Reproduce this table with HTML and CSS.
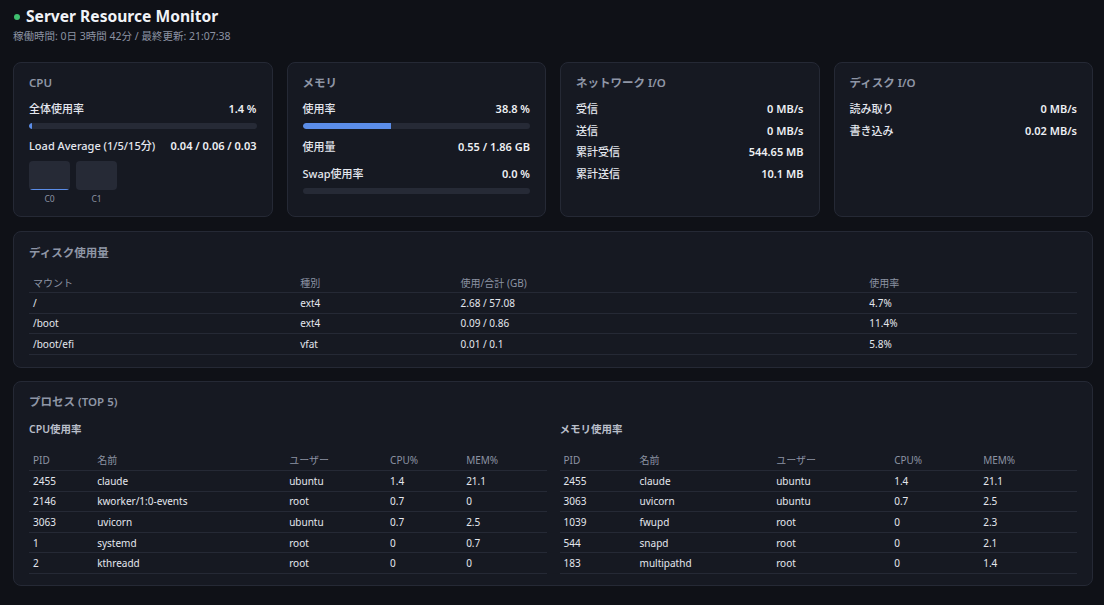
FILE: index.html
```html
<!DOCTYPE html>
<html lang="ja">
<head>
<meta charset="utf-8">
<title>Server Resource Monitor</title>
<link rel="stylesheet" href="styles.css">
</head>
<body>
<div class="page">
  <header class="header">
    <h1 class="title"><span class="dot"></span>Server Resource Monitor</h1>
    <div class="subtitle">稼働時間: 0日 3時間 42分 / 最終更新: 21:07:38</div>
  </header>

  <section class="cards">
    <div class="card">
      <div class="card-title">CPU</div>
      <div class="row"><span class="label">全体使用率</span><span class="value">1.4 %</span></div>
      <div class="bar"><div class="fill" style="width:1.4%"></div></div>
      <div class="row row-load"><span class="label">Load Average (1/5/15分)</span><span class="value">0.04 / 0.06 / 0.03</span></div>
      <div class="cores">
        <div class="core">
          <div class="core-box"><div class="core-fill" style="height:1.4%"></div></div>
          <div class="core-label">C0</div>
        </div>
        <div class="core">
          <div class="core-box"></div>
          <div class="core-label">C1</div>
        </div>
      </div>
    </div>

    <div class="card">
      <div class="card-title">メモリ</div>
      <div class="row"><span class="label">使用率</span><span class="value">38.8 %</span></div>
      <div class="bar"><div class="fill" style="width:38.8%"></div></div>
      <div class="row row-used"><span class="label">使用量</span><span class="value">0.55 / 1.86 GB</span></div>
      <div class="row row-swap"><span class="label">Swap使用率</span><span class="value">0.0 %</span></div>
      <div class="bar bar-swap"><div class="fill" style="width:0%"></div></div>
    </div>

    <div class="card">
      <div class="card-title">ネットワーク I/O</div>
      <div class="list">
        <div class="row"><span class="label">受信</span><span class="value">0 MB/s</span></div>
        <div class="row"><span class="label">送信</span><span class="value">0 MB/s</span></div>
        <div class="row"><span class="label">累計受信</span><span class="value">544.65 MB</span></div>
        <div class="row"><span class="label">累計送信</span><span class="value">10.1 MB</span></div>
      </div>
    </div>

    <div class="card">
      <div class="card-title">ディスク I/O</div>
      <div class="list">
        <div class="row"><span class="label">読み取り</span><span class="value">0 MB/s</span></div>
        <div class="row"><span class="label">書き込み</span><span class="value">0.02 MB/s</span></div>
      </div>
    </div>
  </section>

  <section class="card panel panel-disk">
    <div class="card-title">ディスク使用量</div>
    <table class="tbl disk">
      <colgroup><col class="d1"><col class="d2"><col class="d3"><col class="d4"></colgroup>
      <thead><tr><th>マウント</th><th>種別</th><th>使用/合計 (GB)</th><th>使用率</th></tr></thead>
      <tbody>
        <tr><td>/</td><td>ext4</td><td>2.68 / 57.08</td><td>4.7%</td></tr>
        <tr><td>/boot</td><td>ext4</td><td>0.09 / 0.86</td><td>11.4%</td></tr>
        <tr><td>/boot/efi</td><td>vfat</td><td>0.01 / 0.1</td><td>5.8%</td></tr>
      </tbody>
    </table>
  </section>

  <section class="card panel panel-proc">
    <div class="card-title">プロセス (TOP 5)</div>
    <div class="proc-grid">
      <div>
        <div class="subhead">CPU使用率</div>
        <table class="tbl proc">
          <colgroup><col class="l1"><col class="l2"><col class="l3"><col class="l4"><col class="l5"></colgroup>
          <thead><tr><th>PID</th><th>名前</th><th>ユーザー</th><th>CPU%</th><th>MEM%</th></tr></thead>
          <tbody>
            <tr><td>2455</td><td>claude</td><td>ubuntu</td><td>1.4</td><td>21.1</td></tr>
            <tr><td>2146</td><td>kworker/1:0-events</td><td>root</td><td>0.7</td><td>0</td></tr>
            <tr><td>3063</td><td>uvicorn</td><td>ubuntu</td><td>0.7</td><td>2.5</td></tr>
            <tr><td>1</td><td>systemd</td><td>root</td><td>0</td><td>0.7</td></tr>
            <tr><td>2</td><td>kthreadd</td><td>root</td><td>0</td><td>0</td></tr>
          </tbody>
        </table>
      </div>
      <div>
        <div class="subhead">メモリ使用率</div>
        <table class="tbl proc">
          <colgroup><col class="r1"><col class="r2"><col class="r3"><col class="r4"><col class="r5"></colgroup>
          <thead><tr><th>PID</th><th>名前</th><th>ユーザー</th><th>CPU%</th><th>MEM%</th></tr></thead>
          <tbody>
            <tr><td>2455</td><td>claude</td><td>ubuntu</td><td>1.4</td><td>21.1</td></tr>
            <tr><td>3063</td><td>uvicorn</td><td>ubuntu</td><td>0.7</td><td>2.5</td></tr>
            <tr><td>1039</td><td>fwupd</td><td>root</td><td>0</td><td>2.3</td></tr>
            <tr><td>544</td><td>snapd</td><td>root</td><td>0</td><td>2.1</td></tr>
            <tr><td>183</td><td>multipathd</td><td>root</td><td>0</td><td>1.4</td></tr>
          </tbody>
        </table>
      </div>
    </div>
  </section>
</div>
</body>
</html>
```

FILE: styles.css
```css
* { box-sizing: border-box; }
html, body { margin: 0; padding: 0; }
body {
  background: #0f1117;
  color: #e4e7ee;
  font-family: "Noto Sans", "Noto Sans CJK JP", sans-serif;
  font-size: 11px;
}
.page {
  padding: 6px 11px 16px 13px;
}
.header { margin-bottom: 19px; }
.title {
  margin: 0;
  font-size: 15.6px;
  line-height: 20px;
  font-weight: 700;
  color: #f1f3f7;
  display: flex;
  align-items: center;
}
.dot {
  width: 6px;
  height: 6px;
  border-radius: 50%;
  background: #3fbf6f;
  margin: 2px 6px 0 1px;
}
.subtitle {
  margin-top: 3px;
  line-height: 14px;
  font-size: 10.5px;
  color: #8c93a3;
}
.cards {
  display: grid;
  grid-template-columns: repeat(4, 1fr);
  gap: 14px;
  margin-bottom: 14px;
}
.card {
  background: #161922;
  border: 1px solid #252935;
  border-radius: 8px;
  padding: 13px 15px 11px;
}
.card-title {
  font-size: 11.5px;
  line-height: 14px;
  font-weight: 600;
  color: #8f96a6;
  margin-bottom: 11px;
}
.row {
  display: flex;
  justify-content: space-between;
  line-height: 16px;
}
.label { font-weight: 500; color: #e4e7ee; }
.value { font-weight: 600; color: #eef0f4; }
.row-load { margin-top: 9px; }
.row-used { margin-top: 10px; }
.row-swap { margin-top: 11px; }
.bar {
  margin-top: 6px;
  height: 6px;
  border-radius: 3px;
  background: #262a36;
  overflow: hidden;
}
.bar-swap { margin-top: 6px; }
.fill {
  height: 100%;
  background: #5b8de8;
  border-radius: 3px 0 0 3px;
  min-width: 3px;
}
.bar-swap .fill { min-width: 0; }
.cores {
  display: flex;
  gap: 6px;
  margin-top: 7px;
}
.core { width: 41px; }
.core-box {
  height: 29px;
  border-radius: 4px;
  background: #262a36;
  display: flex;
  flex-direction: column;
  justify-content: flex-end;
  overflow: hidden;
}
.core-fill {
  background: #5b8de8;
  min-height: 1px;
}
.core-label {
  margin-top: 3px;
  text-align: center;
  font-size: 8.5px;
  line-height: 12px;
  color: #8c93a3;
}
.list { display: flex; flex-direction: column; gap: 5.6px; }
.panel { margin-bottom: 13px; padding: 13px 15px 13px; }
.panel-disk { padding-top: 14px; padding-bottom: 12px; }
.panel-proc { padding-bottom: 11px; }
.tbl {
  width: 100%;
  border-collapse: collapse;
  table-layout: fixed;
  font-size: 10px;
}
.tbl th, .tbl td {
  text-align: left;
  padding: 0 4px;
  border-bottom: 1px solid #252935;
  white-space: nowrap;
}
.tbl th {
  font-weight: 400;
  color: #8c93a3;
}
.tbl td { color: #e4e7ee; }
.disk { margin-top: 12px; }
.disk th, .disk td { height: 20.6px; }
.d1 { width: 25.5%; }
.d2 { width: 15.3%; }
.d3 { width: 39%; }
.d4 { width: 20.2%; }
.proc-grid {
  display: grid;
  grid-template-columns: 1fr 1fr;
  gap: 13px;
  margin-top: 13px;
}
.subhead {
  font-size: 10.5px;
  font-weight: 600;
  line-height: 14px;
  color: #b9bec9;
  margin-bottom: 14px;
}
.proc th, .proc td { height: 20.6px; }
.l1 { width: 12.4%; }
.l2 { width: 37.1%; }
.l3 { width: 19.5%; }
.l4 { width: 14.7%; }
.l5 { width: 16.3%; }
.r1 { width: 14.7%; }
.r2 { width: 26.4%; }
.r3 { width: 22.8%; }
.r4 { width: 17.2%; }
.r5 { width: 18.9%; }
```
